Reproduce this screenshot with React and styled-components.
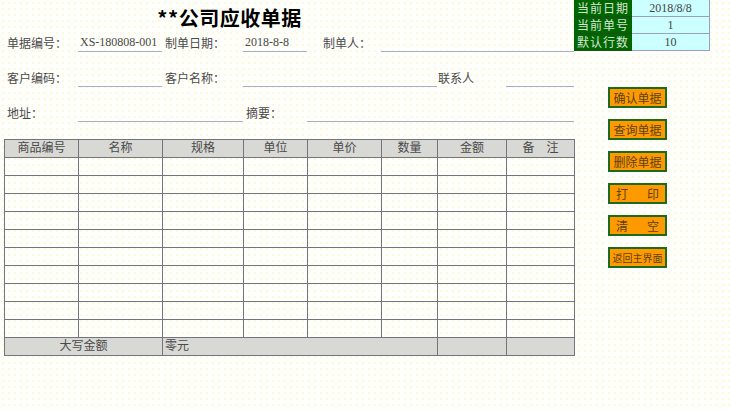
import React from "react";
import styled, { createGlobalStyle } from "styled-components";

const GlobalStyle = createGlobalStyle`
  html, body {
    margin: 0;
    padding: 0;
  }
  body {
    font-family: "Liberation Serif", "Noto Sans CJK SC", serif;
    font-size: 12px;
    color: #444;
  }
`;

const COLS = "74px 84px 81px 64px 74px 56px 69px 68px";

const Page = styled.div`
  display: flex;
  width: 730px;
  height: 410px;
  background-color: #fefefb;
  background-image: radial-gradient(#f6f2bc 0.6px, transparent 0.8px);
  background-size: 6px 6px;
  overflow: hidden;
`;

const Main = styled.div`
  width: 570px;
  padding-left: 4px;
`;

const FormGrid = styled.div`
  display: grid;
  grid-template-columns: ${COLS};
  grid-template-rows: 34px 18px 17px 18px 17px 18px;
`;

const Title = styled.h1`
  grid-column: 2 / 6;
  grid-row: 1;
  margin: 0;
  display: flex;
  align-items: center;
  justify-content: center;
  font-family: "Noto Sans CJK SC", sans-serif;
  font-size: 20px;
  font-weight: 700;
  color: #000;
  letter-spacing: 0.5px;
`;

const Label = styled.div`
  grid-column: ${(p) => p.col};
  grid-row: ${(p) => p.row};
  display: flex;
  align-items: center;
  padding-left: ${(p) => p.indent || 3}px;
  white-space: nowrap;
  color: #4a4a4a;
`;

const Field = styled.div`
  grid-column: ${(p) => p.col};
  grid-row: ${(p) => p.row};
  display: flex;
  align-items: center;
  padding-left: 2px;
  border-bottom: 1px solid #a9adc4;
  color: #4a4a4a;
  white-space: nowrap;
`;

const Sheet = styled.table`
  margin-top: 17px;
  width: 571px;
  border-collapse: collapse;
  table-layout: fixed;
`;

const Cell = styled.td`
  height: 17px;
  padding: 0;
  border: 1px solid #74747c;
  text-align: ${(p) => p.align || "center"};
  padding-left: ${(p) => (p.align === "left" ? "2px" : "0")};
  background: ${(p) => (p.shaded ? "#d8d8d4" : "transparent")};
  color: #4a4a4a;
  white-space: nowrap;
  line-height: 17px;
`;

const Side = styled.div`
  width: 156px;
  display: flex;
  flex-direction: column;
`;

const InfoTable = styled.div`
  display: grid;
  grid-template-columns: 58px 78px;
  grid-auto-rows: 17px;
  width: 136px;
`;

const InfoKey = styled.div`
  background: #006600;
  color: #d6e4d6;
  display: flex;
  align-items: center;
  justify-content: center;
  letter-spacing: 1px;
  border-bottom: 1px solid #1b4d1b;
`;

const InfoValue = styled.div`
  background: #ccffff;
  color: #444;
  display: flex;
  align-items: center;
  justify-content: center;
  border-right: 1px solid #98a0c0;
  border-bottom: 1px solid #98a0c0;
`;

const Buttons = styled.div`
  display: flex;
  flex-direction: column;
  gap: 11px;
  margin: 36px 0 0 34px;
`;

const Button = styled.div`
  box-sizing: border-box;
  width: 59px;
  height: 21px;
  border: 2px solid #1d6a1d;
  background: #ff9900;
  color: #5b4316;
  font-size: ${(p) => (p.small ? "10px" : "12px")};
  display: flex;
  align-items: center;
  justify-content: ${(p) => (p.spread ? "space-between" : "center")};
  padding: 0 ${(p) => (p.spread ? "6px" : "0")};
  white-space: nowrap;
`;

const headers = ["商品编号", "名称", "规格", "单位", "单价", "数量", "金额", "备　注"];
const widths = [74, 84, 81, 64, 74, 56, 69, 68];

export default function App() {
  return (
    <Page>
      <GlobalStyle />
      <Main>
        <FormGrid>
          <Title>**公司应收单据</Title>

          <Label col="1" row="2">单据编号：</Label>
          <Field col="2" row="2">XS-180808-001</Field>
          <Label col="3" row="2">制单日期：</Label>
          <Field col="4" row="2">2018-8-8</Field>
          <Label col="5" row="2" indent={16}>制单人：</Label>
          <Field col="6 / 9" row="2" />

          <Label col="1" row="4">客户编码：</Label>
          <Field col="2" row="4" />
          <Label col="3" row="4">客户名称：</Label>
          <Field col="4 / 7" row="4" />
          <Label col="7" row="4" indent={1}>联系人</Label>
          <Field col="8" row="4" />

          <Label col="1" row="6">地址：</Label>
          <Field col="2 / 4" row="6" />
          <Label col="4" row="6">摘要：</Label>
          <Field col="5 / 9" row="6" />
        </FormGrid>

        <Sheet>
          <colgroup>
            {widths.map((w, i) => (
              <col key={i} style={{ width: w }} />
            ))}
          </colgroup>
          <thead>
            <tr>
              {headers.map((h) => (
                <Cell as="th" key={h} shaded style={{ fontWeight: 400 }}>
                  {h}
                </Cell>
              ))}
            </tr>
          </thead>
          <tbody>
            {Array.from({ length: 10 }).map((_, r) => (
              <tr key={r}>
                {widths.map((_, c) => (
                  <Cell key={c} />
                ))}
              </tr>
            ))}
            <tr>
              <Cell colSpan={2} shaded>大写金额</Cell>
              <Cell colSpan={4} shaded align="left">零元</Cell>
              <Cell shaded />
              <Cell shaded />
            </tr>
          </tbody>
        </Sheet>
      </Main>

      <Side>
        <InfoTable>
          <InfoKey>当前日期</InfoKey>
          <InfoValue>2018/8/8</InfoValue>
          <InfoKey>当前单号</InfoKey>
          <InfoValue>1</InfoValue>
          <InfoKey>默认行数</InfoKey>
          <InfoValue>10</InfoValue>
        </InfoTable>
        <Buttons>
          <Button>确认单据</Button>
          <Button>查询单据</Button>
          <Button>删除单据</Button>
          <Button spread>
            <span>打</span>
            <span>印</span>
          </Button>
          <Button spread>
            <span>清</span>
            <span>空</span>
          </Button>
          <Button small>返回主界面</Button>
        </Buttons>
      </Side>
    </Page>
  );
}
